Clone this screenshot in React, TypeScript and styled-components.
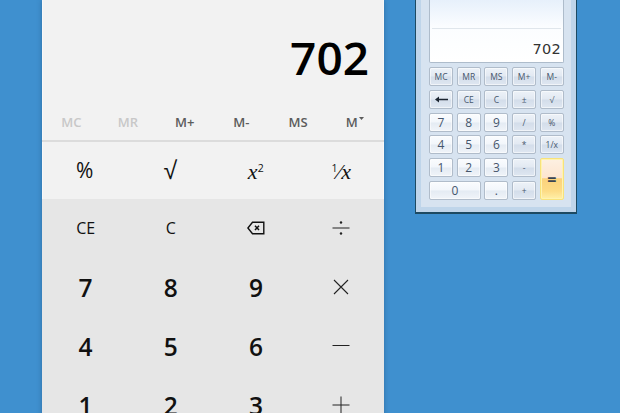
import React from "react";
import styled, { createGlobalStyle } from "styled-components";

const Global = createGlobalStyle`
  html, body { margin: 0; padding: 0; width: 620px; height: 413px; overflow: hidden; }
  #root { width: 620px; height: 413px; }
`;

const Desktop = styled.div`
  width: 620px;
  height: 413px;
  overflow: hidden;
  background: #3f90cf;
  display: flex;
  align-items: flex-start;
  padding-left: 42px;
  box-sizing: border-box;
  font-family: "Open Sans", "Noto Sans", sans-serif;
`;

const ModernCalc = styled.div`
  width: 342px;
  flex: none;
  background: #f2f2f2;
  box-sizing: border-box;
  box-shadow: 0 0 5px rgba(30, 70, 110, 0.45), inset 1px 0 0 #f8f8f8, inset -1px 0 0 #f8f8f8;
`;

const Readout = styled.div`
  height: 107px;
  box-sizing: border-box;
  padding: 27px 15px 0 0;
  text-align: right;
  font-size: 46px;
  line-height: 60px;
  font-weight: 600;
  color: #000;
`;

const MemoryRow = styled.div`
  height: 29px;
  display: grid;
  grid-template-columns: repeat(6, 1fr);
  align-items: center;
  padding: 0 1px 4px;
  border-bottom: 2px solid #dcdcdc;
  box-sizing: content-box;
`;

const MemoryKey = styled.div<{ $off?: boolean }>`
  text-align: center;
  font-size: 13px;
  font-weight: 600;
  color: ${(p) => (p.$off ? "#c8c8c8" : "#5c5c5c")};
`;

const Caret = styled.svg`
  width: 5px;
  height: 3px;
  margin-left: 1px;
  vertical-align: 7px;
`;

const FuncRow = styled.div`
  height: 57px;
  display: grid;
  grid-template-columns: repeat(4, 1fr);
  align-items: center;
  justify-items: center;
  padding-bottom: 1px;
  box-sizing: border-box;
`;

const FuncKey = styled.div<{ $math?: boolean; $root?: boolean }>`
  font-family: ${(p) =>
    p.$math ? '"Liberation Serif", serif' : p.$root ? '"Liberation Sans", sans-serif' : "inherit"};
  font-style: ${(p) => (p.$math ? "italic" : "normal")};
  font-size: ${(p) => (p.$math ? "22px" : p.$root ? "25px" : "21px")};
  line-height: 24px;
  color: #111;
`;

const Sup = styled.span`
  font-family: "Open Sans", sans-serif;
  font-style: normal;
  font-size: 10.5px;
  vertical-align: 7px;
`;

const KeyPad = styled.div`
  background: #e6e6e6;
  display: grid;
  grid-template-columns: repeat(4, 1fr);
  grid-auto-rows: 59px;
  height: 240px;
  padding-left: 1px;
  box-sizing: border-box;
  align-items: center;
  justify-items: center;
`;

const Key = styled.div<{ $kind?: "digit" | "text" }>`
  font-size: ${(p) => (p.$kind === "digit" ? "24.5px" : "16px")};
  font-weight: ${(p) => (p.$kind === "digit" ? 600 : 400)};
  line-height: 30px;
  padding-bottom: ${(p) => (p.$kind === "digit" ? "0" : "2px")};
  color: #111;
  display: flex;
  align-items: center;
`;

const OldWindow = styled.div`
  flex: none;
  width: 162px;
  height: 214px;
  margin-left: 31px;
  box-sizing: border-box;
  background: #bfd5ea;
  border: 1px solid #1d4a62;
  border-top: none;
  border-bottom: 2px solid #1d4a62;
  padding: 0 5px 5px;
  display: flex;
`;

const OldInner = styled.div`
  flex: 1;
  background: #d7e3f0;
  padding: 0 7px 0 8px;
  display: flex;
  flex-direction: column;
  gap: 4px;
`;

const OldDisplay = styled.div`
  height: 63px;
  box-sizing: border-box;
  border: 1px solid #aebccb;
  border-top: none;
  border-radius: 0 0 2px 2px;
  background: linear-gradient(#e7f0fb 0, #fbfdff 27px, #fff 100%);
  position: relative;
  display: flex;
  align-items: flex-end;
  justify-content: flex-end;
  padding: 0 2px 4px 0;
  font-family: "DejaVu Sans", sans-serif;
  font-size: 14.5px;
  letter-spacing: 0.3px;
  line-height: 18px;
  color: #333;
`;

const OldRule = styled.div`
  position: absolute;
  left: 2px;
  right: 2px;
  top: 28px;
  height: 1px;
  background: #e0e6ec;
`;

const OldPad = styled.div`
  display: grid;
  grid-template-columns: repeat(5, 24px);
  grid-auto-rows: 19px;
  column-gap: 3.7px;
  row-gap: 3.8px;
`;

const OldKey = styled.div<{ $tone?: "num" | "op" | "eq"; $wide?: boolean; $tall?: boolean }>`
  box-sizing: border-box;
  grid-column: ${(p) => (p.$wide ? "span 2" : "auto")};
  grid-row: ${(p) => (p.$tall ? "span 2" : "auto")};
  border: 1px solid ${(p) => (p.$tone === "eq" ? "#f8e27a" : "#b0bcca")};
  border-radius: 2px;
  display: flex;
  align-items: center;
  justify-content: center;
  font-family: "Open Sans", sans-serif;
  font-size: ${(p) => (p.$tone === "num" ? "12px" : "8.5px")};
  color: #46566c;
  box-shadow: inset 0 0 0 1px ${(p) => (p.$tone === "eq" ? "#fff3b0" : "rgba(255,255,255,0.55)")};
  background: ${(p) =>
    p.$tone === "eq"
      ? "linear-gradient(#fdf0e2 0, #fde5cf 48%, #fbd27c 49%, #fddc86 80%, #fff0a8 100%)"
      : p.$tone === "num"
      ? "linear-gradient(#fafcfe 0, #f2f6fb 48%, #e4ebf3 52%, #f0f4f9 100%)"
      : "linear-gradient(#edf2f8 0, #e2e9f2 48%, #d3ddea 52%, #dfe7f1 100%)"};
`;

const EqualsMark = styled.span`
  font-size: 16px;
  font-weight: 700;
  line-height: 16px;
  color: #3a4452;
`;

const BackspaceIcon = () => (
  <svg width="18" height="14" viewBox="0 0 18 14" fill="none" stroke="#111" strokeWidth="1.4">
    <path d="M5.5 1.2H16.8V12.8H5.5L0.9 7Z" />
    <path d="M8 4.8L12 9M12 4.8L8 9" strokeWidth="1.5" />
  </svg>
);

const Divide = () => (
  <svg width="18" height="16" viewBox="0 0 18 16" fill="#222">
    <rect x="0.5" y="7.5" width="17" height="1" />
    <circle cx="9" cy="2.5" r="1.2" />
    <circle cx="9" cy="13.5" r="1.2" />
  </svg>
);

const Times = () => (
  <svg width="16" height="16" viewBox="0 0 16 16" stroke="#222" strokeWidth="1.1">
    <path d="M1 1L15 15M15 1L1 15" />
  </svg>
);

const Minus = () => (
  <svg width="18" height="3" viewBox="0 0 18 3" fill="#222">
    <rect x="0.5" y="1" width="17" height="1" />
  </svg>
);

const Plus = () => (
  <svg width="18" height="18" viewBox="0 0 18 18" fill="#222">
    <rect x="0.5" y="8.5" width="17" height="1" />
    <rect x="8.5" y="0.5" width="1" height="17" />
  </svg>
);

const Arrow = () => (
  <svg width="13" height="7" viewBox="0 0 13 7" fill="#1c2530">
    <path d="M0 3.5L4 0.5V2.7H13V4.3H4V6.5Z" />
  </svg>
);

const oldKeys: { t: React.ReactNode; tone: "num" | "op" | "eq"; wide?: boolean; tall?: boolean }[] = [
  { t: "MC", tone: "op" }, { t: "MR", tone: "op" }, { t: "MS", tone: "op" }, { t: "M+", tone: "op" }, { t: "M-", tone: "op" },
  { t: <Arrow />, tone: "op" }, { t: "CE", tone: "op" }, { t: "C", tone: "op" }, { t: "±", tone: "op" }, { t: "√", tone: "op" },
  { t: "7", tone: "num" }, { t: "8", tone: "num" }, { t: "9", tone: "num" }, { t: "/", tone: "op" }, { t: "%", tone: "op" },
  { t: "4", tone: "num" }, { t: "5", tone: "num" }, { t: "6", tone: "num" }, { t: "*", tone: "op" }, { t: "1/x", tone: "op" },
  { t: "1", tone: "num" }, { t: "2", tone: "num" }, { t: "3", tone: "num" }, { t: "-", tone: "op" },
  { t: <EqualsMark>=</EqualsMark>, tone: "eq", tall: true },
  { t: "0", tone: "num", wide: true }, { t: ".", tone: "num" }, { t: "+", tone: "op" },
];

export default function App() {
  return (
    <Desktop>
      <Global />
      <ModernCalc>
        <Readout>702</Readout>
        <MemoryRow>
          <MemoryKey $off>MC</MemoryKey>
          <MemoryKey $off>MR</MemoryKey>
          <MemoryKey>M+</MemoryKey>
          <MemoryKey>M-</MemoryKey>
          <MemoryKey>MS</MemoryKey>
          <MemoryKey>
            M
            <Caret viewBox="0 0 5 3" fill="#5c5c5c">
              <path d="M0 0H5L2.5 3Z" />
            </Caret>
          </MemoryKey>
        </MemoryRow>
        <FuncRow>
          <FuncKey>%</FuncKey>
          <FuncKey $root>√</FuncKey>
          <FuncKey $math>x<Sup>2</Sup></FuncKey>
          <FuncKey $math><Sup>1</Sup>⁄x</FuncKey>
        </FuncRow>
        <KeyPad>
          <Key $kind="text">CE</Key>
          <Key $kind="text">C</Key>
          <Key><BackspaceIcon /></Key>
          <Key><Divide /></Key>
          <Key $kind="digit">7</Key>
          <Key $kind="digit">8</Key>
          <Key $kind="digit">9</Key>
          <Key><Times /></Key>
          <Key $kind="digit">4</Key>
          <Key $kind="digit">5</Key>
          <Key $kind="digit">6</Key>
          <Key><Minus /></Key>
          <Key $kind="digit">1</Key>
          <Key $kind="digit">2</Key>
          <Key $kind="digit">3</Key>
          <Key><Plus /></Key>
        </KeyPad>
      </ModernCalc>
      <OldWindow>
        <OldInner>
          <OldDisplay>
            <OldRule />
            702
          </OldDisplay>
          <OldPad>
            {oldKeys.map((k, i) => (
              <OldKey key={i} $tone={k.tone} $wide={k.wide} $tall={k.tall}>
                {k.t}
              </OldKey>
            ))}
          </OldPad>
        </OldInner>
      </OldWindow>
    </Desktop>
  );
}
